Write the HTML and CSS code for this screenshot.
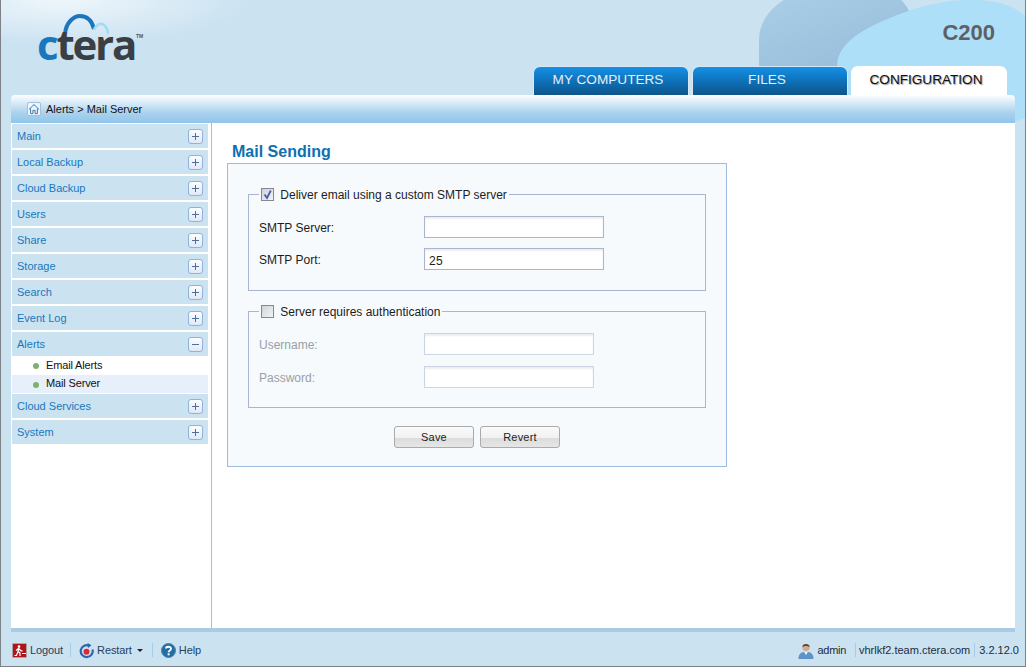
FILE: index.html
```html
<!DOCTYPE html>
<html lang="en">
<head>
    <meta charset="UTF-8">
    <meta name="viewport" content="width=device-width, initial-scale=1.0">
    <title>CTERA C200 - Mail Server</title>
    <link rel="stylesheet" href="styles.css">
</head>
<body>
<div class="app">
    <!-- background shapes behind the header -->
    <svg class="blobs" width="1024" height="130" viewBox="0 0 1024 130">
        <defs>
            <linearGradient id="blobShade" x1="0.2" y1="0" x2="0.8" y2="1">
                <stop offset="0" stop-color="#a8cde6"/>
                <stop offset="1" stop-color="#93b9d6"/>
            </linearGradient>
        </defs>
        <path d="M758 40 C758 18 775 3 790 -4 L896 -4 C908 6 914 20 914 36 C914 62 860 70 830 90 L758 90 Z" fill="url(#blobShade)"/>
        <path d="M836 66 C836 40 870 24 910 10 C950 -3 1000 -6 1024 16 L1024 118 L990 130 L836 100 Z" fill="#addff8"/>
    </svg>

    <header class="top">
        <div class="logo">
            <svg class="logo-arc" width="70" height="34" viewBox="0 0 70 34">
                <path d="M14 22 C15 10 23 4 29 4 C36 4 41 9 43 17" fill="none" stroke="#1a77bd" stroke-width="4"/>
                <path d="M43 18 C45 12 51 10 54 14 C56 16 57 19 57 22" fill="none" stroke="#a5dbf6" stroke-width="2.5"/>
            </svg>
            <span class="logo-text"><span class="logo-c">c</span>tera</span>
            <span class="logo-tm">TM</span>
        </div>
        <div class="top-right">
            <div class="model">C200</div>
            <nav class="tabs">
                <a class="tab">MY COMPUTERS</a>
                <a class="tab">FILES</a>
                <a class="tab active">CONFIGURATION</a>
            </nav>
        </div>
    </header>

    <div class="crumbs">
        <span class="home-btn">
            <svg width="13" height="12" viewBox="0 0 13 12">
                <path d="M1 6.5 L6.5 1.2 L12 6.5 M2.8 5.5 V11 H5.3 V7.5 H7.7 V11 H10.2 V5.5" fill="none" stroke="#2f6fae" stroke-width="1"/>
            </svg>
        </span>
        <span>Alerts &gt; Mail Server</span>
    </div>

    <div class="middle">
        <aside class="sidebar">
            <div class="menu-head"><span>Main</span><i class="toggle plus"></i></div>
            <div class="menu-head"><span>Local Backup</span><i class="toggle plus"></i></div>
            <div class="menu-head"><span>Cloud Backup</span><i class="toggle plus"></i></div>
            <div class="menu-head"><span>Users</span><i class="toggle plus"></i></div>
            <div class="menu-head"><span>Share</span><i class="toggle plus"></i></div>
            <div class="menu-head"><span>Storage</span><i class="toggle plus"></i></div>
            <div class="menu-head"><span>Search</span><i class="toggle plus"></i></div>
            <div class="menu-head"><span>Event Log</span><i class="toggle plus"></i></div>
            <div class="menu-head open"><span>Alerts</span><i class="toggle"></i></div>
            <div class="menu-sub">Email Alerts</div>
            <div class="menu-sub current">Mail Server</div>
            <div class="menu-head"><span>Cloud Services</span><i class="toggle plus"></i></div>
            <div class="menu-head"><span>System</span><i class="toggle plus"></i></div>
        </aside>

        <main class="content">
            <h2 class="title">Mail Sending</h2>
            <form class="panel">
                <fieldset class="group">
                    <legend>
                        <span class="check">
                            <svg width="11" height="11" viewBox="0 0 11 11">
                                <path d="M2.5 5.5 L5 9 L8.8 1.5" fill="none" stroke="#4a5fa8" stroke-width="1.8"/>
                            </svg>
                        </span>
                        Deliver email using a custom SMTP server
                    </legend>
                    <div class="row"><label>SMTP Server:</label><input class="field" type="text"></div>
                    <div class="row"><label>SMTP Port:</label><input class="field" type="text" value="25"></div>
                </fieldset>
                <fieldset class="group group-auth">
                    <legend><span class="check"></span> Server requires authentication</legend>
                    <div class="row off"><label>Username:</label><input class="field" type="text" disabled></div>
                    <div class="row off"><label>Password:</label><input class="field" type="password" disabled></div>
                </fieldset>
                <div class="actions">
                    <button type="button" class="btn">Save</button>
                    <button type="button" class="btn">Revert</button>
                </div>
            </form>
        </main>
    </div>

    <footer class="bottom">
        <div class="foot-left">
            <span class="foot-item">
                <svg width="15" height="15" viewBox="0 0 15 15">
                    <rect x="0.5" y="0.5" width="14" height="14" rx="1" fill="#b3141c" stroke="#a9a5a5"/>
                    <circle cx="7" cy="3.6" r="1.3" fill="#fff"/>
                    <path d="M7 5 L6 8.5 L8 10 L8 13 M6 8.5 L4.5 12.5 L2.5 12.5 M6.5 5.5 L4 7.5 M7 6 L9 7.8 L10.5 7.8 M10 10.5 H14" fill="none" stroke="#fff" stroke-width="1.2"/>
                </svg>
                Logout
            </span>
            <i class="sep"></i>
            <span class="foot-item">
                <svg width="15" height="17" viewBox="0 0 15 17">
                    <path d="M10.5 3.8 A6 6 0 1 0 13.5 7.5" fill="none" stroke="#2d66ab" stroke-width="2.2"/>
                    <path d="M8.5 1 L12.5 3.2 L9 6 Z" fill="#2d66ab"/>
                    <circle cx="7.5" cy="9.8" r="3" fill="#dc2a35"/>
                </svg>
                Restart
                <i class="caret"></i>
            </span>
            <i class="sep"></i>
            <span class="foot-item">
                <svg width="15" height="15" viewBox="0 0 15 15">
                    <circle cx="7.5" cy="7.5" r="7" fill="#1f6fa8" stroke="#5c7f9a" stroke-width="1"/>
                    <path d="M5 5.6 C5 3.2 10 3.1 10 5.7 C10 7.4 7.6 7.4 7.6 9.2" fill="none" stroke="#fff" stroke-width="1.9"/>
                    <rect x="6.6" y="10.3" width="2" height="2" fill="#fff"/>
                </svg>
                Help
            </span>
        </div>
        <div class="foot-right">
            <span class="foot-item user">
                <svg width="16" height="17" viewBox="0 0 16 17">
                    <path d="M0.5 17 C0.5 12 3 10.5 6 10 L8 12 L10 10 C13 10.5 15.5 12 15.5 17 Z" fill="#5e93c8"/>
                    <path d="M6.5 10.5 L8 13 L9.5 10.5 Z" fill="#fff"/>
                    <circle cx="8" cy="5.5" r="3.6" fill="#d3a98a"/>
                    <path d="M4.4 5 C4 1 12 1 11.6 5 C10 3.5 6 3.5 4.4 5 Z" fill="#57463b"/>
                </svg>
                <span class="user-name">admin</span>
            </span>
            <i class="sep"></i>
            <span>vhrlkf2.team.ctera.com</span>
            <i class="sep"></i>
            <span>3.2.12.0</span>
        </div>
    </footer>
</div>
</body>
</html>
```

FILE: styles.css
```css
html, body {
    margin: 0;
    padding: 0;
}
body {
    font-family: "Liberation Sans", Arial, sans-serif;
    font-size: 11px;
    overflow: hidden;
}
.app {
    position: relative;
    box-sizing: border-box;
    width: 1026px;
    height: 667px;
    display: flex;
    flex-direction: column;
    overflow: hidden;
    border: 1px solid #7d8286;
    border-top: none;
    background-color: #cbe2f1;
    background-image: radial-gradient(ellipse 190px 45px at 60px 0, #eef6fb 0%, #cbe2f1 100%);
}
.blobs {
    position: absolute;
    top: 0;
    left: 0;
}

/* header */
.top {
    position: relative;
    height: 95px;
    flex: none;
    display: flex;
    justify-content: space-between;
}
.logo {
    position: relative;
    width: 120px;
    height: 60px;
    margin-left: 36px;
}
.logo-arc {
    position: absolute;
    top: 12px;
    left: 14px;
}
.logo-text {
    position: absolute;
    top: 14px;
    left: 0;
    font-family: "Open Sans", sans-serif;
    font-size: 42px;
    font-weight: 700;
    line-height: 60px;
    letter-spacing: -2.2px;
    color: #3b3f43;
}
.logo-c {
    color: #1a77bd;
}
.logo-tm {
    position: absolute;
    top: 33px;
    left: 99px;
    font-size: 5px;
    font-weight: bold;
    color: #555;
}
.top-right {
    display: flex;
    flex-direction: column;
    align-items: flex-end;
    justify-content: space-between;
}
.model {
    margin: 20px 30px 0 0;
    font-size: 22px;
    font-weight: bold;
    line-height: 26px;
    color: #5e6164;
}
.tabs {
    display: flex;
    gap: 3px;
    margin-right: 18px;
}
.tab {
    box-sizing: border-box;
    width: 156px;
    height: 29px;
    padding: 5px 6px 0 0;
    font-size: 13.6px;
    line-height: 16px;
    text-align: center;
    color: #e6eef5;
    border: 1px solid #d6e8f5;
    border-bottom: none;
    border-radius: 7px 7px 0 0;
    background: linear-gradient(#1590e6, #0d6fb5 55%, #0f558a);
}
.tab.active {
    color: #111;
    border-color: #fff;
    background: #fff;
    text-shadow: 1px 1px 1px #999;
}

/* breadcrumb */
.crumbs {
    position: relative;
    height: 28px;
    flex: none;
    box-sizing: border-box;
    margin: 0 10px;
    padding: 0 0 1px 16px;
    display: flex;
    align-items: center;
    gap: 5px;
    color: #111;
    border-radius: 4px 4px 0 0;
    background: linear-gradient(#fdfeff, #a9d1ee 65%, #90c5ea);
}
.home-btn {
    box-sizing: border-box;
    width: 14px;
    height: 14px;
    display: flex;
    align-items: center;
    justify-content: center;
    border: 1px solid #a4bede;
    border-radius: 2px;
    background: #eef5fc;
}

/* sidebar + content */
.middle {
    position: relative;
    flex: 1;
    margin: 0 10px;
    display: flex;
    background: #fff;
    border-bottom: 4px solid #a9cce4;
}
.sidebar {
    box-sizing: border-box;
    width: 201px;
    flex: none;
    padding: 1px 3px 0 1px;
    border-right: 1px solid #a5bfe0;
    border-left: 0;
}
.menu-head {
    height: 24px;
    margin-bottom: 2px;
    padding: 0 5px 0 5px;
    display: flex;
    align-items: center;
    justify-content: space-between;
    color: #1878bd;
    background: #cbe2f1;
}
.menu-head.open {
    margin-bottom: 0;
}
.toggle {
    position: relative;
    box-sizing: border-box;
    width: 15px;
    height: 15px;
    border: 1px solid #8fb2e2;
    border-radius: 3px;
    background: linear-gradient(#fdfeff, #dfe9f8);
}
.toggle::before {
    content: "";
    position: absolute;
    top: 6px;
    left: 3px;
    width: 7px;
    height: 1px;
    background: #4f6d96;
}
.toggle.plus::after {
    content: "";
    position: absolute;
    top: 3px;
    left: 6px;
    width: 1px;
    height: 7px;
    background: #4f6d96;
}
.menu-sub {
    position: relative;
    height: 18px;
    padding-left: 34px;
    line-height: 18px;
    letter-spacing: -0.15px;
    color: #111;
}
.menu-sub::before {
    content: "";
    position: absolute;
    top: 7px;
    left: 21px;
    width: 6px;
    height: 6px;
    border-radius: 50%;
    background: #7cb36a;
}
.menu-sub.current {
    height: 18px;
    margin-top: 1px;
    margin-bottom: 1px;
    line-height: 17px;
    background: #e6effa;
}
.content {
    flex: 1;
    padding-left: 15px;
}
.title {
    margin: 19px 0 0 5px;
    font-size: 16px;
    font-weight: bold;
    line-height: 20px;
    color: #0f6fb0;
}
.panel {
    box-sizing: border-box;
    width: 500px;
    height: 304px;
    padding: 23px 20px 0;
    margin-top: 1px;
    font-size: 12px;
    color: #1c1c1c;
    border: 1px solid #9dbce0;
    background: #f6fafd;
}

/* form */
.group {
    box-sizing: border-box;
    height: 104px;
    margin: 0;
    padding: 0 0 0 10px;
    border: 1px solid #a9b5d2;
}
.group-auth {
    margin-top: 13px;
}
.group legend {
    height: 14px;
    padding: 0 2px;
    margin-left: 0;
    line-height: 16px;
    white-space: nowrap;
}
.check {
    box-sizing: border-box;
    display: inline-block;
    width: 13px;
    height: 13px;
    margin-right: 3px;
    vertical-align: -2px;
    border: 1px solid #85898f;
    background: linear-gradient(135deg, #cfd2d9, #f3f4f7);
}
.check svg {
    display: block;
}
.row {
    height: 22px;
    margin-top: 10px;
    display: flex;
    align-items: center;
}
.group .row:first-of-type {
    margin-top: 15px;
}
.row label {
    width: 165px;
    flex: none;
    padding-top: 2px;
}
.field {
    box-sizing: border-box;
    width: 180px;
    height: 22px;
    padding: 3px 4px 0;
    font-family: inherit;
    font-size: 12px;
    letter-spacing: 0.25px;
    color: #1c1c1c;
    border: 1px solid #acb4cc;
    background: #fff;
    box-shadow: inset 0 2px 2px #eee;
}
.group-auth .row {
    margin-top: 11px;
}
.group-auth .row:first-of-type {
    margin-top: 15px;
}
.off {
    color: #98a0a8;
}
.off .field {
    width: 170px;
    border-color: #ccd6e2;
}
.actions {
    margin-top: 18px;
    display: flex;
    justify-content: center;
    gap: 6px;
}
.btn {
    box-sizing: border-box;
    width: 80px;
    height: 22px;
    padding: 0;
    font-family: inherit;
    font-size: 11px;
    letter-spacing: 0.2px;
    color: #222;
    border: 1px solid #a8aaab;
    border-radius: 3px;
    background: linear-gradient(#fafafa 0, #f1f1f1 55%, #dcdcdc 56%, #e6e6e6 100%);
}

/* footer */
.bottom {
    box-sizing: border-box;
    height: 34px;
    flex: none;
    margin: 0 6px 0 11px;
    padding-top: 2px;
    display: flex;
    align-items: center;
    justify-content: space-between;
    color: #24415f;
}
.foot-left,
.foot-right,
.foot-item {
    display: flex;
    align-items: center;
}
.foot-left {
    gap: 7px;
    letter-spacing: -0.1px;
}
.foot-left .sep {
    margin-right: 1px;
}
.foot-item {
    gap: 3px;
}
.foot-right {
    gap: 4px;
    color: #1c2c40;
}
.sep {
    width: 1px;
    height: 14px;
    background: #a6cbe8;
}
.foot-right .user {
    gap: 4px;
    margin-right: 5px;
}
.user + .sep {
    margin-right: -1px;
}
.user-name {
    letter-spacing: -0.3px;
}
.caret {
    width: 0;
    height: 0;
    margin: 0 2px 0 2px;
    border-top: 3px solid #222;
    border-left: 3px solid transparent;
    border-right: 3px solid transparent;
}
```
